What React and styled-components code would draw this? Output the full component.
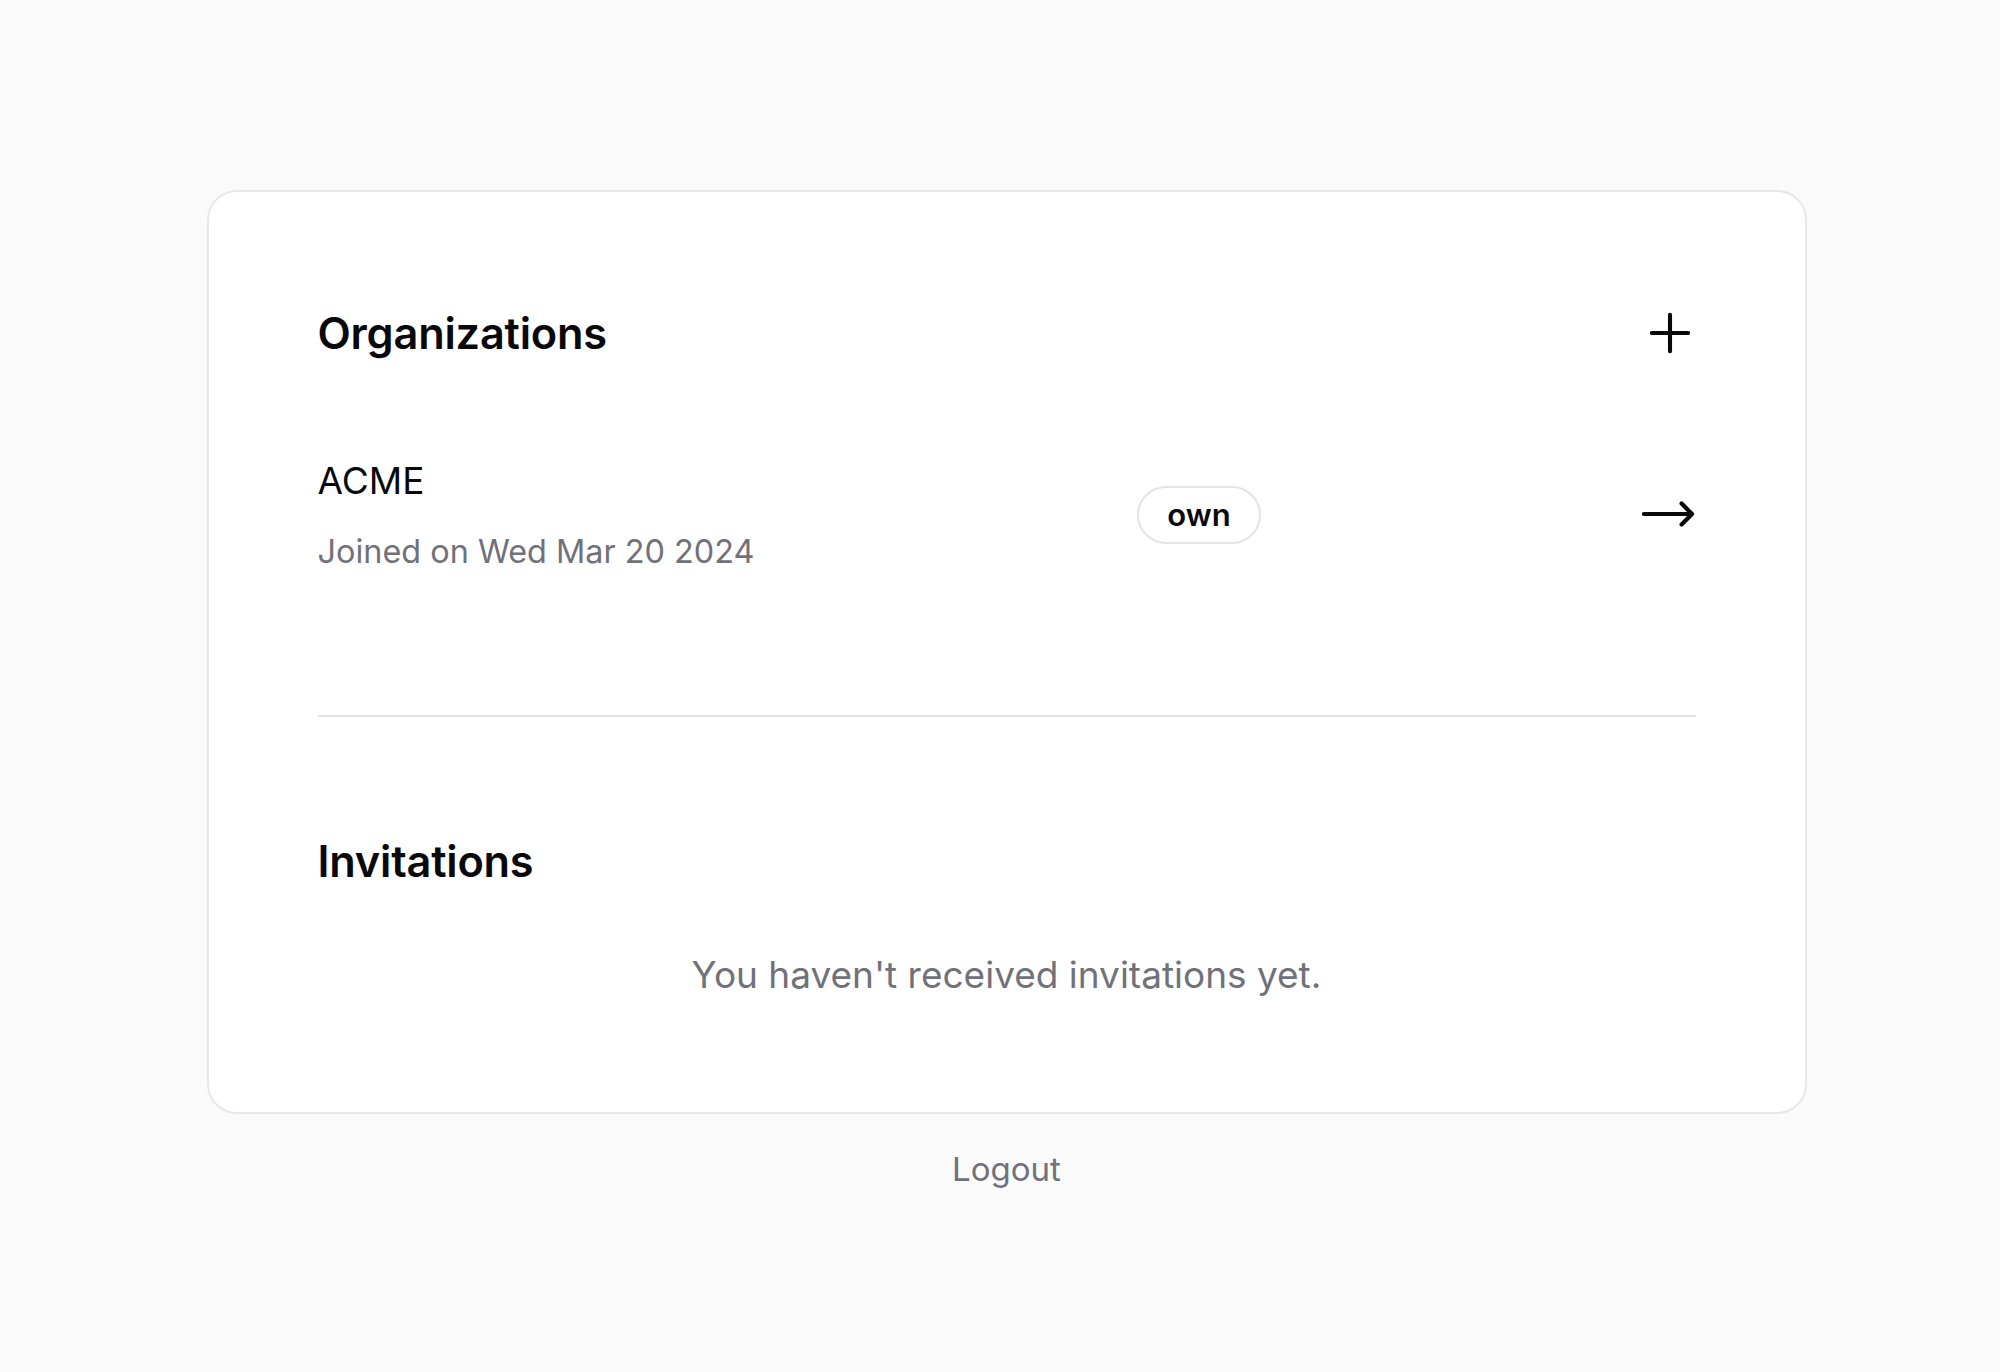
import React from "react";
import styled, { createGlobalStyle } from "styled-components";

const Global = createGlobalStyle`
  html, body { margin: 0; padding: 0; background: #fafafa; }
  body { font-family: Inter, "Noto Sans", sans-serif; color: #09090b; }
  * { box-sizing: border-box; }
`;

const Page = styled.main`
  min-height: 1372px;
  display: flex;
  flex-direction: column;
  align-items: center;
  padding: 190px 0 0 13px;
`;

const Card = styled.section`
  width: 1600px;
  background: #ffffff;
  border: 2px solid #e7e7e9;
  border-radius: 30px;
  padding: 109px 109px 110px 109px;
  display: flex;
  flex-direction: column;
`;

const SectionHeader = styled.div`
  display: flex;
  align-items: center;
  justify-content: space-between;
  height: 64px;
  margin-bottom: ${(p) => p.$gap}px;
`;

const Title = styled.h2`
  margin: 0;
  font-size: 43.3px;
  line-height: 64px;
  font-weight: 600;
  letter-spacing: -0.2px;
  color: #09090b;
`;

const IconButton = styled.button`
  border: 0;
  background: transparent;
  padding: 0;
  display: flex;
  align-items: center;
  justify-content: center;
  color: #09090b;
  cursor: pointer;
`;

const OrgRow = styled.div`
  display: flex;
  align-items: center;
  justify-content: space-between;
`;

const OrgInfo = styled.div`
  display: flex;
  flex-direction: column;
  gap: 20px;
`;

const OrgName = styled.div`
  font-size: 37px;
  line-height: 55px;
  font-weight: 400;
  color: #09090b;
`;

const OrgMeta = styled.div`
  font-size: 32.4px;
  line-height: 48px;
  color: #71717a;
`;

const Badge = styled.span`
  display: inline-flex;
  align-items: center;
  justify-content: center;
  height: 58px;
  padding: 0 28px;
  margin-left: 2px;
  border: 2px solid #e4e4e7;
  border-radius: 999px;
  font-size: 31px;
  font-weight: 600;
  color: #09090b;
`;

const Divider = styled.hr`
  border: 0;
  height: 2px;
  background: #e4e4e7;
  margin: 139px 0 112px;
  width: 100%;
`;

const Empty = styled.p`
  margin: 0;
  text-align: center;
  font-size: 37px;
  line-height: 54px;
  color: #71717a;
`;

const Logout = styled.button`
  margin-top: 29px;
  border: 0;
  background: transparent;
  font-family: inherit;
  font-size: 33px;
  line-height: 50px;
  color: #71717a;
  cursor: pointer;
`;

const PlusIcon = () => (
  <svg width="58" height="58" viewBox="0 0 24 24" fill="none" stroke="currentColor" strokeWidth="1.7" strokeLinecap="round" strokeLinejoin="round" style={{ marginRight: -3 }}>
    <path d="M12 4.5v15m7.5-7.5h-15" />
  </svg>
);

const ArrowIcon = () => (
  <svg width="54" height="30" viewBox="0 0 54 30" fill="none" stroke="currentColor" strokeWidth="4.2" strokeLinecap="round" strokeLinejoin="round">
    <path d="M50 14 L39.6 3.6 M50 14 L39.6 24.4 M50 14 H2" />
  </svg>
);

export default function App() {
  return (
    <>
      <Global />
      <Page>
        <Card>
          <SectionHeader $gap={88}>
            <Title>Organizations</Title>
            <IconButton aria-label="Create organization"><PlusIcon /></IconButton>
          </SectionHeader>
          <OrgRow>
            <OrgInfo>
              <OrgName>ACME</OrgName>
              <OrgMeta>Joined on Wed Mar 20 2024</OrgMeta>
            </OrgInfo>
            <Badge>own</Badge>
            <IconButton aria-label="Open ACME"><ArrowIcon /></IconButton>
          </OrgRow>
          <Divider />
          <SectionHeader $gap={55}>
            <Title>Invitations</Title>
          </SectionHeader>
          <Empty>You haven't received invitations yet.</Empty>
        </Card>
        <Logout>Logout</Logout>
      </Page>
    </>
  );
}
